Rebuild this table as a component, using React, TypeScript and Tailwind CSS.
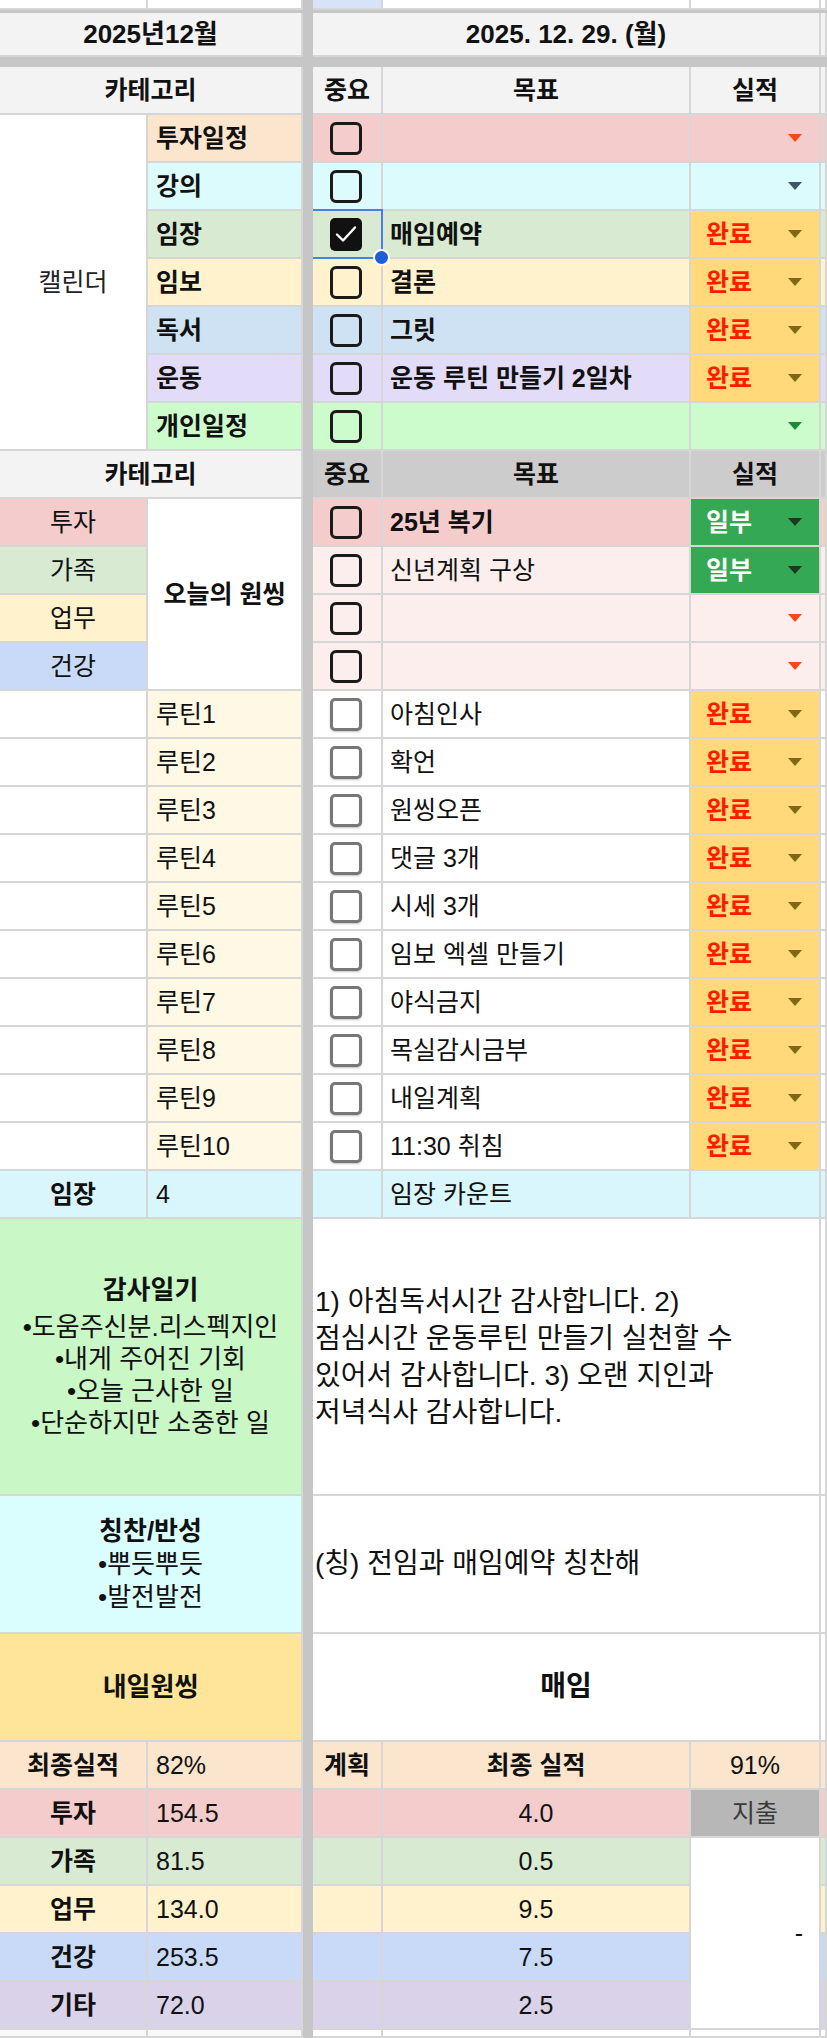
import type { ReactNode } from 'react'

const line = 'border-r-2 border-b-2 border-[#d6d6d6]'

function Cell({ className = '', children }: { className?: string; children?: ReactNode }) {
  return <div className={`flex items-center overflow-hidden whitespace-nowrap ${line} ${className}`}>{children}</div>
}

function Box({ checked = false, soft = false }: { checked?: boolean; soft?: boolean }) {
  if (checked) {
    return (
      <span className="flex h-[33px] w-[32px] items-center justify-center rounded-[5px] bg-[#111]">
        <svg width="24" height="20" viewBox="0 0 24 20">
          <path d="M3 10.5l6 6L21 3.5" fill="none" stroke="#fff" strokeWidth="2.4" strokeLinecap="round" strokeLinejoin="round" />
        </svg>
      </span>
    )
  }
  return (
    <span
      className={
        soft
          ? 'h-[33px] w-[32px] rounded-[5px] border-[3.5px] border-[#777] bg-white shadow-[0_1px_2px_rgba(0,0,0,0.25)]'
          : 'h-[33px] w-[32px] rounded-[6px] border-[3.5px] border-[#1a1a1a]'
      }
    />
  )
}

function Check({ bg, checked, soft, selected }: { bg: string; checked?: boolean; soft?: boolean; selected?: boolean }) {
  return (
    <Cell className={`relative justify-center pr-[3px] ${bg} ${selected ? 'z-10 overflow-visible' : ''}`}>
      <Box checked={checked} soft={soft} />
      {selected && (
        <>
          <span className="absolute -top-[2px] left-0 -right-[2px] -bottom-[2px] border-2 border-l-0 border-[#4a80e0]" />
          <span className="absolute -right-[9px] -bottom-[9px] h-[17px] w-[17px] rounded-full border-2 border-white bg-[#1c5fd9]" />
        </>
      )}
    </Cell>
  )
}

const caret = { red: '#f24a1d', slate: '#3e5568', green: '#1b8a3a', done: '#7f6a14', part: '#173b1f' }
type Kind = keyof typeof caret

function Pick({ kind, bg = '' }: { kind: Kind; bg?: string }) {
  const fill = kind === 'done' ? 'bg-[#ffd97a]' : kind === 'part' ? 'bg-[#34a853]' : bg
  const label = kind === 'done' ? '완료' : kind === 'part' ? '일부' : ''
  return (
    <Cell className={`justify-between pl-[15px] pr-[17px] ${fill}`}>
      <span className={kind === 'part' ? 'font-bold text-white' : 'font-bold text-[#ff1a00]'}>{label}</span>
      <svg width="14" height="8" viewBox="0 0 14 8">
        <path d="M0 0h14L7 8z" fill={caret[kind]} />
      </svg>
    </Cell>
  )
}

const calendar: { cat: string; catBg: string; bg: string; goal: string; pick: Kind; checked?: boolean }[] = [
  { cat: '투자일정', catBg: 'bg-[#fce5cd]', bg: 'bg-[#f4cccc]', goal: '', pick: 'red' },
  { cat: '강의', catBg: 'bg-[#dcfbfd]', bg: 'bg-[#dcfbfd]', goal: '', pick: 'slate' },
  { cat: '임장', catBg: 'bg-[#d9ead3]', bg: 'bg-[#d9ead3]', goal: '매임예약', pick: 'done', checked: true },
  { cat: '임보', catBg: 'bg-[#fff2cc]', bg: 'bg-[#fff2cc]', goal: '결론', pick: 'done' },
  { cat: '독서', catBg: 'bg-[#cfe2f3]', bg: 'bg-[#cfe2f3]', goal: '그릿', pick: 'done' },
  { cat: '운동', catBg: 'bg-[#e2dcf8]', bg: 'bg-[#e2dcf8]', goal: '운동 루틴 만들기 2일차', pick: 'done' },
  { cat: '개인일정', catBg: 'bg-[#cdfccc]', bg: 'bg-[#cdfccc]', goal: '', pick: 'green' },
]

const oneThing: { cat: string; catBg: string; bg: string; goal: string; bold?: boolean; pick: Kind }[] = [
  { cat: '투자', catBg: 'bg-[#f4cccc]', bg: 'bg-[#f4cccc]', goal: '25년 복기', bold: true, pick: 'part' },
  { cat: '가족', catBg: 'bg-[#d9ead3]', bg: 'bg-[#fdeeee]', goal: '신년계획 구상', pick: 'part' },
  { cat: '업무', catBg: 'bg-[#fff2cc]', bg: 'bg-[#fdeeee]', goal: '', pick: 'red' },
  { cat: '건강', catBg: 'bg-[#c9daf8]', bg: 'bg-[#fdeeee]', goal: '', pick: 'red' },
]

const routines = ['아침인사', '확언', '원씽오픈', '댓글 3개', '시세 3개', '임보 엑셀 만들기', '야식금지', '목실감시금부', '내일계획', '11:30 취침']

const totals = [
  { k: '투자', v: '154.5', r: '4.0', bg: 'bg-[#f4cccc]' },
  { k: '가족', v: '81.5', r: '0.5', bg: 'bg-[#d9ead3]' },
  { k: '업무', v: '134.0', r: '9.5', bg: 'bg-[#fff2cc]' },
  { k: '건강', v: '253.5', r: '7.5', bg: 'bg-[#c9daf8]' },
  { k: '기타', v: '72.0', r: '2.5', bg: 'bg-[#d9d2e9]' },
]

export default function App() {
  return (
    <div className="w-[827px] bg-white text-[25px] leading-none text-[#111] font-['Liberation_Sans','Noto_Sans_CJK_KR',sans-serif]">
      <div className="grid grid-cols-[148px_155px_10px_70px_308px_130px_6px] grid-rows-[10px_3px_44px_10px_48px_repeat(23,48px)_277px_138px_108px_repeat(6,48px)_8px]">
        {/* frozen pane bars */}
        <div className="col-start-3 row-span-full bg-[#c6c6c6]" />
        <div className="col-span-full row-start-2 bg-[#c6c6c6]" />
        <div className="col-span-full row-start-4 bg-[#c6c6c6]" />

        {/* row above, cut off */}
        <Cell />
        <Cell />
        <Cell className="bg-[#d6e3f8]" />
        <Cell />
        <Cell />
        <Cell />

        {/* date header */}
        <Cell className="col-span-2 justify-center bg-[#f3f3f3] text-[26px] font-bold">2025년12월</Cell>
        <Cell className="col-span-3 justify-center bg-[#f3f3f3] text-[26px] font-bold">2025. 12. 29. (월)</Cell>
        <Cell className="bg-[#f3f3f3]" />

        {/* calendar */}
        <Cell className="col-span-2 justify-center bg-[#f3f3f3] font-bold">카테고리</Cell>
        <Cell className="justify-center bg-[#f3f3f3] font-bold">중요</Cell>
        <Cell className="justify-center bg-[#f3f3f3] font-bold">목표</Cell>
        <Cell className="justify-center bg-[#f3f3f3] font-bold">실적</Cell>
        <Cell className="bg-[#f3f3f3]" />

        {calendar.map((row, i) => (
          <div key={row.cat} className="contents">
            {i === 0 && <Cell className="row-span-7 justify-center bg-white text-[#222]">캘린더</Cell>}
            <Cell className={`pl-[8px] font-bold ${row.catBg}`}>{row.cat}</Cell>
            <Check bg={row.bg} checked={row.checked} selected={row.checked} />
            <Cell className={`pl-[7px] font-bold ${row.bg}`}>{row.goal}</Cell>
            <Pick kind={row.pick} bg={row.bg} />
            <Cell className={row.bg} />
          </div>
        ))}

        {/* today's one thing */}
        <Cell className="col-span-2 justify-center bg-[#f3f3f3] font-bold">카테고리</Cell>
        <Cell className="justify-center bg-[#cccccc] font-bold">중요</Cell>
        <Cell className="justify-center bg-[#cccccc] font-bold">목표</Cell>
        <Cell className="justify-center bg-[#cccccc] font-bold">실적</Cell>
        <Cell className="bg-[#cccccc]" />

        {oneThing.map((row, i) => (
          <div key={row.cat} className="contents">
            <Cell className={`justify-center ${row.catBg}`}>{row.cat}</Cell>
            {i === 0 && <Cell className="row-span-4 justify-center bg-white font-bold">오늘의 원씽</Cell>}
            <Check bg={row.bg} />
            <Cell className={`pl-[7px] ${row.bold ? 'font-bold' : ''} ${row.bg}`}>{row.goal}</Cell>
            <Pick kind={row.pick} bg={row.bg} />
            <Cell className={row.bg} />
          </div>
        ))}

        {/* routines */}
        {routines.map((goal, i) => (
          <div key={goal} className="contents">
            <Cell className="bg-white" />
            <Cell className="bg-[#fff8e5] pl-[8px]">루틴{i + 1}</Cell>
            <Check bg="bg-white" soft />
            <Cell className="bg-white pl-[7px]">{goal}</Cell>
            <Pick kind="done" />
            <Cell className="bg-white" />
          </div>
        ))}

        <Cell className="justify-center bg-[#d9f6fd] font-bold">임장</Cell>
        <Cell className="bg-[#d9f6fd] pl-[8px]">4</Cell>
        <Cell className="bg-[#d9f6fd]" />
        <Cell className="bg-[#d9f6fd] pl-[7px]">임장 카운트</Cell>
        <Cell className="bg-[#d9f6fd]" />
        <Cell className="bg-[#d9f6fd]" />

        {/* journal */}
        <Cell className="col-span-2 flex-col justify-center bg-[#c9f7c5] text-[26px]">
          <span className="mb-[5px] font-bold leading-[32px]">감사일기</span>
          <span className="leading-[32px]">•도움주신분.리스펙지인</span>
          <span className="leading-[32px]">•내게 주어진 기회</span>
          <span className="leading-[32px]">•오늘 근사한 일</span>
          <span className="leading-[32px]">•단순하지만 소중한 일</span>
        </Cell>
        <Cell className="col-span-3 flex-col items-start justify-center bg-white pl-[2px] text-[28px] leading-[37px]">
          <span>1) 아침독서시간 감사합니다. 2)</span>
          <span>점심시간 운동루틴 만들기 실천할 수</span>
          <span>있어서 감사합니다. 3) 오랜 지인과</span>
          <span>저녁식사 감사합니다.</span>
        </Cell>
        <Cell className="bg-white" />

        <Cell className="col-span-2 flex-col justify-center bg-[#dafdfe] text-[26px] leading-[33px]">
          <span className="font-bold">칭찬/반성</span>
          <span>•뿌듯뿌듯</span>
          <span>•발전발전</span>
        </Cell>
        <Cell className="col-span-3 bg-white pl-[2px] text-[28px]">(칭) 전임과 매임예약 칭찬해</Cell>
        <Cell className="bg-white" />

        <Cell className="col-span-2 justify-center bg-[#ffe599] text-[26px] font-bold">내일원씽</Cell>
        <Cell className="col-span-3 justify-center bg-white text-[28px] font-bold">매임</Cell>
        <Cell className="bg-white" />

        {/* totals */}
        <Cell className="justify-center bg-[#fce5cd] font-bold">최종실적</Cell>
        <Cell className="bg-[#fce5cd] pl-[8px]">82%</Cell>
        <Cell className="justify-center bg-[#fce5cd] font-bold">계획</Cell>
        <Cell className="justify-center bg-[#fce5cd] font-bold">최종 실적</Cell>
        <Cell className="justify-center bg-[#fce5cd]">91%</Cell>
        <Cell className="bg-[#fce5cd]" />

        {totals.map((row, i) => (
          <div key={row.k} className="contents">
            <Cell className={`justify-center font-bold ${row.bg}`}>{row.k}</Cell>
            <Cell className={`pl-[8px] ${row.bg}`}>{row.v}</Cell>
            <Cell className={row.bg} />
            <Cell className={`justify-center ${row.bg}`}>{row.r}</Cell>
            {i === 0 && <Cell className="justify-center bg-[#b7b7b7] text-[#3a3a3a]">지출</Cell>}
            {i === 1 && <Cell className="row-span-4 justify-end bg-white pr-[16px]">-</Cell>}
            <Cell className={row.bg} />
          </div>
        ))}

        {/* next row, cut off */}
        <Cell className="bg-[#f8f8f8]" />
        <Cell className="bg-[#f8f8f8]" />
        <Cell />
        <Cell />
        <Cell />
        <Cell />
      </div>
    </div>
  )
}
